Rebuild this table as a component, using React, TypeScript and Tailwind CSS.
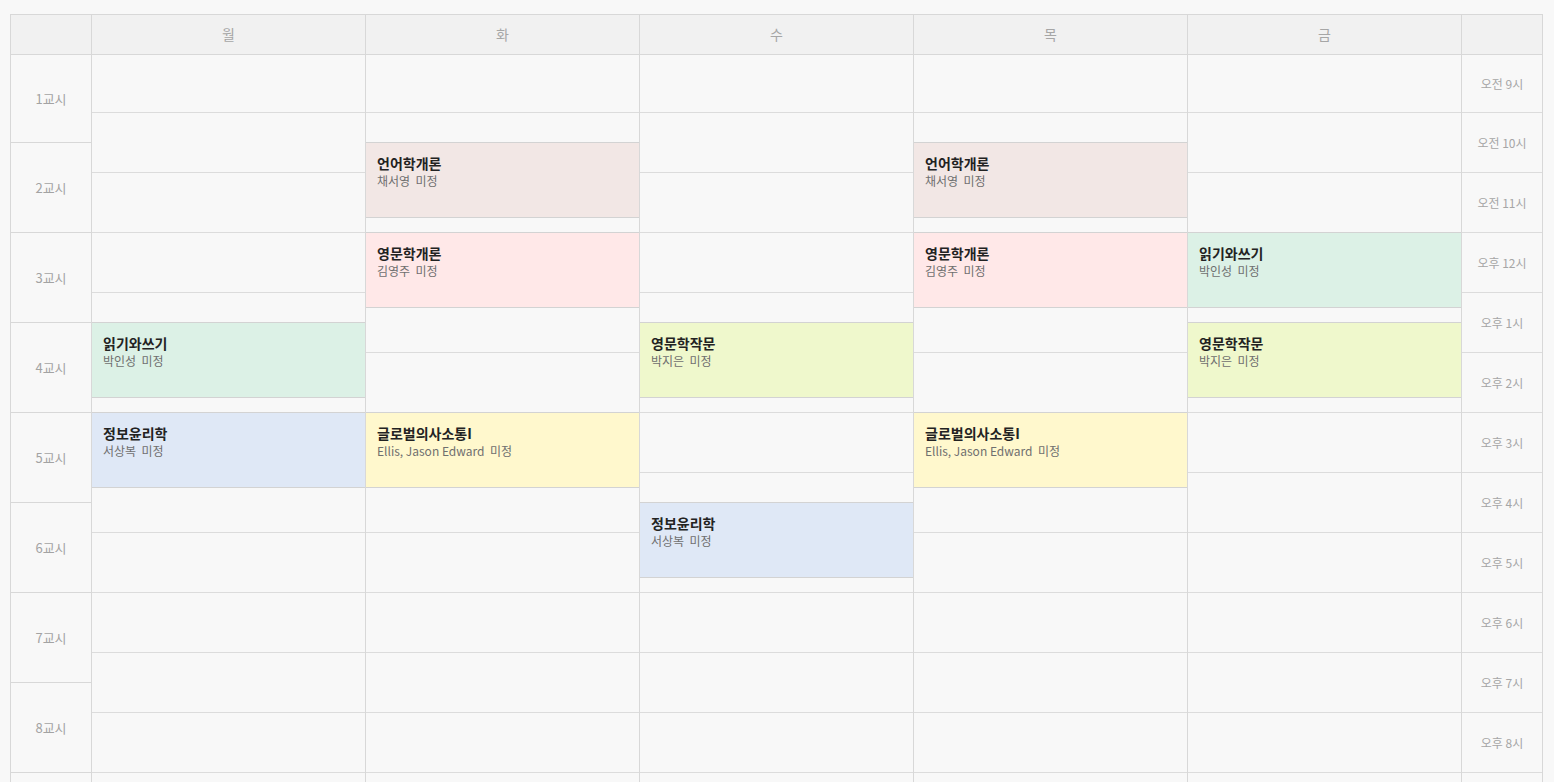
import React from 'react';

type Lesson = { start: number; title: string; prof: string; color: string };

const days = ['월', '화', '수', '목', '금'];

// the last entry is the row cut off at the bottom of the screen
const periods = ['1교시', '2교시', '3교시', '4교시', '5교시', '6교시', '7교시', '8교시', ''];

const hours = [
  '오전 9시', '오전 10시', '오전 11시', '오후 12시', '오후 1시', '오후 2시',
  '오후 3시', '오후 4시', '오후 5시', '오후 6시', '오후 7시', '오후 8시', '',
];

// start = minutes after 9:00, every lesson is 75 min
const schedule: Lesson[][] = [
  [
    { start: 270, title: '읽기와쓰기', prof: '박인성', color: 'bg-[#dcf1e6]' },
    { start: 360, title: '정보윤리학', prof: '서상복', color: 'bg-[#dfe8f6]' },
  ],
  [
    { start: 90, title: '언어학개론', prof: '채서영', color: 'bg-[#f2e7e5]' },
    { start: 180, title: '영문학개론', prof: '김영주', color: 'bg-[#ffe8e8]' },
    { start: 360, title: '글로벌의사소통I', prof: 'Ellis, Jason Edward', color: 'bg-[#fff8cd]' },
  ],
  [
    { start: 270, title: '영문학작문', prof: '박지은', color: 'bg-[#eff8cc]' },
    { start: 450, title: '정보윤리학', prof: '서상복', color: 'bg-[#dfe8f6]' },
  ],
  [
    { start: 90, title: '언어학개론', prof: '채서영', color: 'bg-[#f2e7e5]' },
    { start: 180, title: '영문학개론', prof: '김영주', color: 'bg-[#ffe8e8]' },
    { start: 360, title: '글로벌의사소통I', prof: 'Ellis, Jason Edward', color: 'bg-[#fff8cd]' },
  ],
  [
    { start: 180, title: '읽기와쓰기', prof: '박인성', color: 'bg-[#dcf1e6]' },
    { start: 270, title: '영문학작문', prof: '박지은', color: 'bg-[#eff8cc]' },
  ],
];

const font = { fontFamily: '"Noto Sans CJK KR", "Noto Sans", sans-serif' };

const App = () => {
  return (
    <div className="h-screen overflow-hidden bg-[#f8f8f8] pt-[14px] pl-[10px]" style={font}>
      <div className="w-[1533px] border-l border-t border-[#d8d8d8]">
        {/* Header */}
        <div className="flex h-[40px] bg-[#f1f1f1] border-b border-[#d8d8d8]">
          <div className="w-[81px] border-r border-[#d8d8d8]" />
          {days.map((d) => (
            <div
              key={d}
              className="w-[274px] border-r border-[#d8d8d8] flex items-center justify-center text-[14px] text-[#a6a6a6]"
            >
              {d}
            </div>
          ))}
          <div className="w-[81px] border-r border-[#d8d8d8]" />
        </div>

        {/* Body */}
        <div className="flex">
          <div className="w-[81px] border-r border-[#d8d8d8] flex flex-col">
            {periods.map((p, i) => (
              <div
                key={i}
                className={`${i === 0 ? 'h-[88px]' : 'h-[90px]'} shrink-0 border-b border-[#d8d8d8] flex items-center justify-center text-[13px] text-[#a3a3a3]`}
              >
                {p}
              </div>
            ))}
          </div>

          {schedule.map((lessons, di) => (
            <div key={di} className="relative w-[274px] border-r border-[#d8d8d8] flex flex-col">
              {hours.map((h, i) => (
                <div
                  key={i}
                  className={`${i === 0 ? 'h-[58px]' : 'h-[60px]'} shrink-0 border-b border-[#dcdcdc]`}
                />
              ))}
              {lessons.map((l) => (
                <div
                  key={l.title + l.start}
                  className={`absolute left-0 right-0 h-[76px] border-y border-[#d3d3d3] ${l.color} px-[11px] pt-[10px]`}
                  style={{ top: l.start - 3 }}
                >
                  <div className="text-[14px] leading-[20px] font-bold text-[#222]">{l.title}</div>
                  <div className="text-[12px] leading-[16px] text-[#6f6f6f]">
                    {l.prof}&nbsp; 미정
                  </div>
                </div>
              ))}
            </div>
          ))}

          <div className="w-[81px] border-r border-[#d8d8d8] flex flex-col">
            {hours.map((h, i) => (
              <div
                key={i}
                className={`${i === 0 ? 'h-[58px]' : 'h-[60px]'} shrink-0 border-b border-[#dcdcdc] flex items-center justify-center text-[12px] text-[#a6a6a6]`}
              >
                {h}
              </div>
            ))}
          </div>
        </div>
      </div>
    </div>
  );
};

export default App;
